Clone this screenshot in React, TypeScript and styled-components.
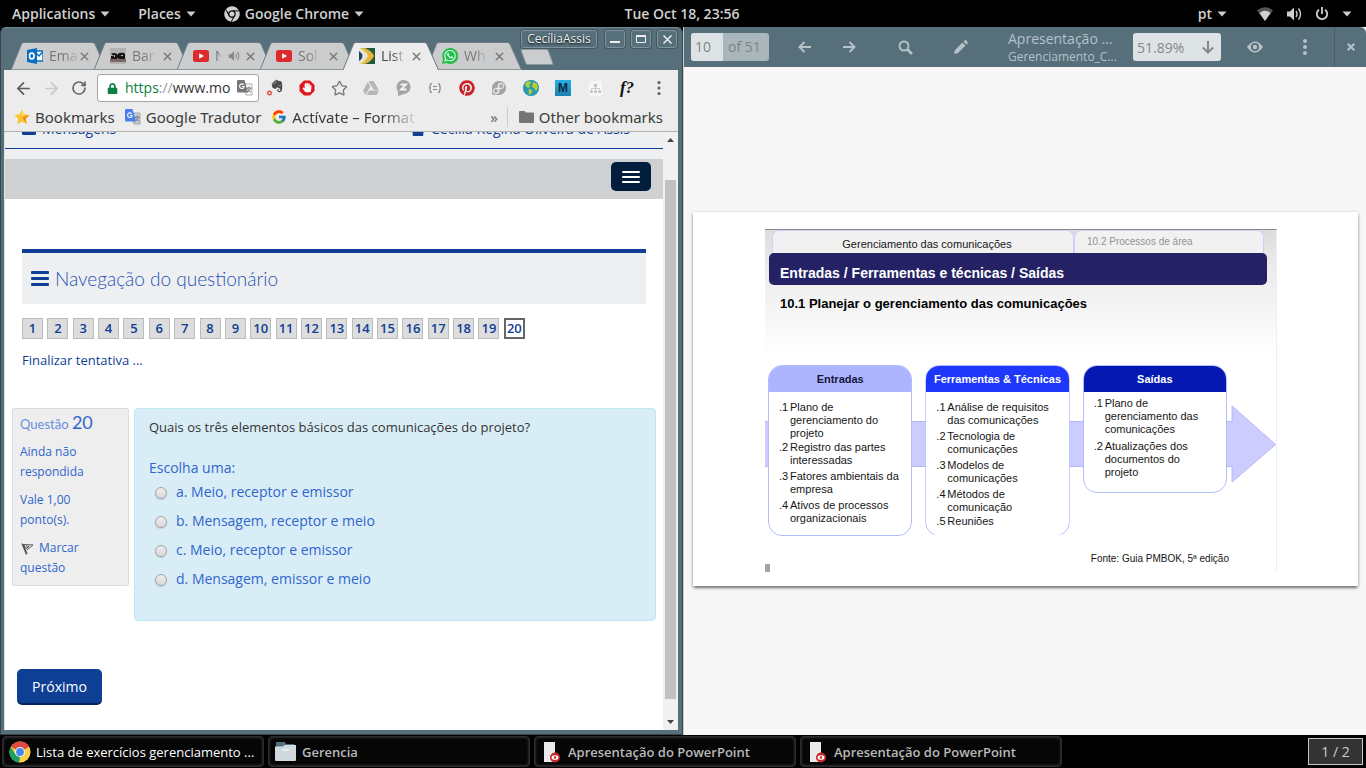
import React from 'react';
import styled, { createGlobalStyle, css } from 'styled-components';
import {
  FaChrome, FaWhatsapp, FaPinterest, FaGoogleDrive, FaFedora, FaEvernote, FaHandPaper, FaLock, FaGlobeAmericas, FaSitemap,
} from 'react-icons/fa';
import { FcGoogle } from 'react-icons/fc';
import { ArrowLeft, ArrowRight, RotateCw, Star, X } from 'lucide-react';

const ui = `'Open Sans', 'Noto Sans', sans-serif`;
const body = `'Open Sans', sans-serif`;
const navy = '#0f3e95';
const blue = '#2f66cc';
const frame = '#566f7b';

const Global = createGlobalStyle`
  *, *::before, *::after { box-sizing: border-box; }
  body { margin: 0; background: #000; font-family: ${ui}; }
  button, input { font: inherit; color: inherit; margin: 0; padding: 0; border: 0; background: none; }
  button { cursor: pointer; }
  a { color: inherit; text-decoration: none; }
  svg { display: block; flex: none; }
  p, h1, h2, h3, ul, ol, fieldset { margin: 0; padding: 0; border: 0; font-weight: inherit; list-style: none; }
`;

const Desktop = styled.div`
  display: flex;
  flex-direction: column;
  min-height: 100vh;
`;

/* ---------- Top panel ---------- */
const Panel = styled.header`
  display: grid;
  grid-template-columns: 1fr auto 1fr;
  align-items: center;
  height: 27px;
  padding: 0 14px 0 12px;
  color: #d0d0d0;
  font-size: 14px;
  font-weight: 600;
  line-height: 20px;
`;
const PanelGroup = styled.div<{ $end?: boolean }>`
  display: flex;
  align-items: center;
  gap: ${p => (p.$end ? 14 : 28)}px;
  justify-content: ${p => (p.$end ? 'flex-end' : 'flex-start')};
`;
const PanelButton = styled.button`
  display: flex;
  align-items: center;
  gap: 5px;
  white-space: nowrap;
`;
const StatusIcons = styled.div`
  display: flex;
  align-items: center;
  gap: 13px;
  margin-left: 16px;
`;
const Caret = () => (
  <svg width="10" height="6" viewBox="0 0 10 6"><path d="M0.5 0.5h9L5 5.5z" fill="#ccc" /></svg>
);

const Windows = styled.main`
  flex: 1;
  display: grid;
  grid-template-columns: minmax(0, 1fr) minmax(0, 1fr);
`;

/* ---------- Browser window ---------- */
const Browser = styled.section`
  position: relative;
  display: flex;
  flex-direction: column;
  background: ${frame};
  border: 1px solid #3a454b;
  border-top-color: #6d8791;
  border-radius: 6px 6px 0 0;
  padding: 0 4px 4px 3px;
`;
const WindowControls = styled.div`
  position: absolute;
  top: 2px;
  right: 5px;
  display: flex;
  gap: 6px;
`;
const controlBox = css`
  display: flex;
  align-items: center;
  justify-content: center;
  height: 18px;
  border: 1px solid #7e939c;
  border-radius: 3px;
  box-shadow: 0 0 0 1px #46585f;
  color: #f0f0f0;
`;
const UserBadge = styled.button`
  ${controlBox}
  width: 76px;
  margin-right: 2px;
  font-size: 12px;
  line-height: 16px;
  text-shadow: 0 1px 2px #000;
`;
const ControlButton = styled.button`
  ${controlBox}
  width: 20px;
`;
const TabStrip = styled.div`
  display: flex;
  align-items: flex-end;
  height: 42px;
  padding-left: 7px;
`;
const TabBox = styled.div<{ $active?: boolean }>`
  position: relative;
  z-index: ${p => (p.$active ? 2 : 1)};
  width: 96px;
  height: 28px;
  margin-right: -13px;
  padding: 0 16px 0 16px;
  display: flex;
  align-items: center;
  color: ${p => (p.$active ? '#454545' : '#777')};
  > svg:first-child { position: absolute; inset: 0; z-index: -1; }
`;
const TabTitle = styled.button`
  flex: 1;
  min-width: 0;
  display: flex;
  align-items: center;
  gap: 6px;
  white-space: nowrap;
  font-size: 14px;
  line-height: 20px;
`;
const TabText = styled.span<{ $narrow?: boolean }>`
  ${p => p.$narrow && 'width: 6px; overflow: hidden;'}
  mask-image: linear-gradient(90deg, #000 50%, rgba(0, 0, 0, 0.15));
`;
const TabClose = styled.button`
  color: #777;
  margin-left: 4px;
`;
const NewTab = styled.button`
  width: 28px;
  height: 16px;
  margin: 0 0 5px 14px;
  background: #cbcccd;
  border: 1px solid #8a979d;
  border-radius: 2px;
  transform: skewX(20deg);
`;

const Toolbar = styled.div`
  display: flex;
  align-items: center;
  height: 36px;
  padding: 0 3px 0 5px;
  background: #ececec;
  color: #5a5a5a;
`;
const ToolButton = styled.button<{ $w?: number }>`
  flex: none;
  width: ${p => p.$w ?? 32}px;
  height: 28px;
  display: flex;
  align-items: center;
  justify-content: center;
`;
const Address = styled.label`
  flex: 1;
  min-width: 0;
  height: 28px;
  margin-left: 4px;
  padding: 0 8px 0 9px;
  display: flex;
  align-items: center;
  gap: 7px;
  background: #fff;
  border: 1px solid #a5a5a5;
  border-radius: 3px;
  font-size: 14px;
  line-height: 20px;
  color: #333;
`;
const Url = styled.span`
  flex: 1;
  white-space: nowrap;
  i { font-style: normal; color: #0b8043; }
  em { font-style: normal; color: #999; }
`;
const Bookmarks = styled.nav`
  display: flex;
  align-items: center;
  height: 26px;
  padding: 0 15px 4px 10px;
  background: #ececec;
  border-bottom: 1px solid #b3b3b3;
  color: #3b3b3b;
  font-family: 'Noto Sans', sans-serif;
  font-size: 15px;
  line-height: 20px;
`;
const Bookmark = styled.a<{ $fade?: boolean }>`
  display: flex;
  align-items: center;
  gap: 5px;
  margin-right: 10px;
  white-space: nowrap;
  ${p => p.$fade && css`
    mask-image: linear-gradient(90deg, #000 78%, rgba(0, 0, 0, 0.1));
  `}
`;
const OtherBookmarks = styled(Bookmark)`
  margin: 0 0 0 9px;
  padding-left: 11px;
  border-left: 1px solid #ccc;
`;
const More = styled.button`
  margin-left: auto;
  color: #666;
`;

/* ---------- Quiz page ---------- */
const Viewport = styled.div`
  flex: 1;
  display: flex;
  background: #fff;
  border-left: 1px solid #dfe3e5;
`;
const Page = styled.div`
  flex: 1;
  min-width: 0;
  font-family: ${body};
  color: ${blue};
`;
const AccountBar = styled.div`
  display: grid;
  grid-template-columns: 389px 1fr;
  align-content: end;
  height: 17px;
  padding: 0 17px 9px;
  overflow: hidden;
  background: #eeeff1;
  border-bottom: 1px solid ${navy};
  color: ${navy};
  font-size: 14px;
  line-height: 20px;
`;
const AccountLink = styled.a`
  display: flex;
  align-items: center;
  gap: 6px;
  white-space: nowrap;
`;
const MenuBar = styled.div`
  display: flex;
  justify-content: flex-end;
  height: 50px;
  padding: 3px 12px 0;
  background: #cfd0d2;
  border-top: 10px solid #eeeff1;
`;
const MenuButton = styled.button`
  width: 40px;
  height: 29px;
  display: flex;
  align-items: center;
  justify-content: center;
  background: #031e3c;
  border-radius: 5px;
`;
const NavBlock = styled.section`
  margin: 50px 17px 0;
`;
const NavHeading = styled.h2`
  display: flex;
  align-items: center;
  gap: 6px;
  height: 55px;
  padding: 0 9px 0 9px;
  background: #eeeff1;
  border-top: 4px solid ${navy};
  color: #2553b4;
  font-family: Lato, sans-serif;
  font-size: 19px;
  font-weight: 300;
  line-height: 24px;
`;
const Numbers = styled.ol`
  display: flex;
  justify-content: space-between;
  max-width: 503px;
  margin-top: 14px;
`;
const NumberLink = styled.a<{ $current?: boolean }>`
  display: flex;
  justify-content: center;
  width: 21px;
  height: 21px;
  border: ${p => (p.$current ? '2px solid #666' : '1px solid #bbb')};
  background: ${p => (p.$current ? '#fff' : '#ddd')};
  color: ${navy};
  font-size: 13px;
  font-weight: 600;
  line-height: ${p => (p.$current ? 17 : 19)}px;
`;
const FinishLink = styled.a`
  display: inline-block;
  margin-top: 11px;
  color: ${navy};
  font-size: 13px;
  line-height: 20px;
`;
const Question = styled.div`
  display: flex;
  align-items: flex-start;
  gap: 5px;
  margin: 38px 7px 0;
`;
const Info = styled.aside`
  flex: none;
  width: 117px;
  padding: 3px 7px 7px;
  background: #eee;
  border: 1px solid #dcdcdc;
  border-radius: 2px;
  font-size: 12px;
  line-height: 20px;
  p { margin-top: 8px; }
`;
const InfoTitle = styled.h3`
  font-family: Lato, sans-serif;
  font-size: 13px;
  color: #6a8fdc;
  b { font-size: 18px; font-weight: 400; color: ${blue}; }
`;
const FlagButton = styled.button`
  margin-top: 8px;
  text-align: left;
  svg { display: inline-block; vertical-align: -4px; margin: 0 4px 0 1px; }
`;
const Content = styled.div`
  flex: 1;
  min-width: 0;
  min-height: 213px;
  padding: 8px 14px;
  background: #d9edf7;
  border: 1px solid #bce8f1;
  border-radius: 4px;
  font-size: 14px;
  line-height: 20px;
`;
const QuestionText = styled.p`
  margin-bottom: 21px;
  color: #333;
  font-size: 13px;
`;
const Options = styled.div`
  display: grid;
  gap: 9px;
  margin-top: 4px;
`;
const Option = styled.label`
  display: flex;
  align-items: center;
  gap: 9px;
  padding-left: 6px;
`;
const Radio = styled.input`
  appearance: none;
  width: 12px;
  height: 12px;
  border: 1px solid #a3a3a3;
  border-radius: 50%;
  background: linear-gradient(#ededed, #dadada);
  box-shadow: 0 1px 1px rgba(0, 0, 0, 0.15);
  margin-top: 2px;
`;
const NextButton = styled.button`
  display: block;
  margin: 48px 0 0 12px;
  width: 85px;
  height: 36px;
  background: ${navy};
  border-bottom: 2px solid #06245c;
  border-radius: 5px;
  color: #fff;
  font-size: 14px;
`;
const ScrollTrack = styled.div`
  width: 15px;
  display: flex;
  flex-direction: column;
  align-items: center;
  gap: 38px;
  padding: 6px 0;
  background: #f1f1f1;
`;
const ScrollThumb = styled.div`
  flex: 1;
  width: 11px;
  margin-bottom: -17px;
  background: #c1c1c1;
`;

/* ---------- Document viewer ---------- */
const Viewer = styled.section`
  display: flex;
  flex-direction: column;
  background: #f7f7f7;
  border-left: 1px solid #c9cccd;
`;
const ViewerBar = styled.div`
  display: flex;
  align-items: center;
  height: 40px;
  padding-left: 7px;
  background: ${frame};
  color: #b5c2c8;
  border-radius: 0 6px 0 0;
`;
const PageField = styled.label`
  display: flex;
  width: 78px;
  height: 28px;
  border-radius: 3px;
  overflow: hidden;
  background: #a9b6bb;
  color: #7d8386;
  font-size: 14px;
  line-height: 28px;
  input { width: 32px; margin-right: 5px; padding-left: 4px; background: #dde2e4; }
`;
const ViewerButton = styled.button<{ $w: number }>`
  width: ${p => p.$w}px;
  height: 40px;
  display: flex;
  align-items: center;
  justify-content: center;
`;
const DocTitle = styled.div`
  flex: 1;
  min-width: 0;
  margin: 0 16px 0 39px;
  font-size: 12px;
  line-height: 16px;
  white-space: nowrap;
  h1 { font-size: 14px; font-weight: 500; line-height: 20px; }
`;
const ZoomField = styled.label`
  display: flex;
  align-items: center;
  width: 88px;
  height: 28px;
  border-radius: 3px;
  background: #dde2e4;
  color: #84898c;
  font-size: 14px;
  input { width: 68px; padding-left: 4px; }
`;
const MoreButton = styled(ViewerButton)`
  margin-right: 13px;
`;
const CloseButton = styled(ViewerButton)`
  border-left: 1px solid #4a6069;
`;
const Paper = styled.article`
  flex: 1;
  display: flex;
  align-items: center;
  padding: 0 8px 5px 9px;
`;
const Sheet = styled.div`
  flex: 1;
  min-width: 0;
  padding: 17px 78px 14px 72px;
  background: #fff;
  box-shadow: 0 1px 3px rgba(0, 0, 0, 0.35), 0 3px 3px -1px rgba(0, 0, 0, 0.4);
`;
const Slide = styled.div`
  position: relative;
  height: 343px;
  margin-right: 3px;
  padding-right: 9px;
  border-right: 1px solid #ebebff;
  background: linear-gradient(#dcdcdc, #ececec 38px, #fff 126px);
  border-top: 1px solid #8b8b8b;
  font-family: 'Liberation Sans', sans-serif;
  color: #161616;
`;
const SlideTabs = styled.div`
  display: grid;
  grid-template-columns: 302px 1fr;
  height: 23px;
  margin: 0 3px 0 7px;
`;
const SlideTab = styled.div<{ $muted?: boolean }>`
  background: #f1f1f1;
  border: 1px solid #cfd0f7;
  border-bottom: 0;
  border-radius: 7px 7px 0 0;
  padding: ${p => (p.$muted ? '4px 12px' : '6px 0 0 8px')};
  text-align: ${p => (p.$muted ? 'left' : 'center')};
  color: ${p => (p.$muted ? '#929292' : '#161616')};
  font-size: ${p => (p.$muted ? 10 : 11)}px;
  line-height: 14px;
`;
const SlideTitle = styled.h2`
  height: 32px;
  margin-left: 4px;
  padding: 11px 11px 0;
  border-radius: 5px;
  background: #242265;
  color: #fff;
  font-size: 14px;
  font-weight: 700;
  line-height: 18px;
`;
const SlideSubtitle = styled.h3`
  padding: 11px 15px 0;
  font-size: 13px;
  font-weight: 700;
  line-height: 16px;
  color: #000;
`;
const FlowArrow = styled.svg`
  position: absolute;
  left: 0;
  right: 0;
  top: 175px;
  width: 100%;
  height: 78px;
`;
const Cards = styled.div`
  position: relative;
  display: grid;
  grid-template-columns: repeat(3, 1fr);
  align-items: start;
  gap: 13px;
  margin: 53px 40px 0 3px;
`;
const Card = styled.section<{ $h: number; $open?: boolean }>`
  height: ${p => p.$h}px;
  overflow: hidden;
  background: #fff;
  border: 1px solid #b4bcfb;
  border-radius: 14px;
  ${p => p.$open && 'clip-path: inset(0 0 1px 0);'}
`;
const CardTitle = styled.h4<{ $bg: string; $dark?: boolean }>`
  margin: 0;
  height: 26px;
  background: ${p => p.$bg};
  color: ${p => (p.$dark ? '#15153c' : '#fff')};
  font-size: 11px;
  font-weight: 700;
  line-height: 27px;
  text-align: center;
  white-space: nowrap;
`;
const CardList = styled.ul<{ $top: number }>`
  padding: ${p => p.$top}px 0 0 10px;
  font-size: 11px;
  line-height: 13px;
  white-space: nowrap;
`;
const CardItem = styled.li<{ $after?: number }>`
  display: grid;
  grid-template-columns: 11px 1fr;
  margin-bottom: ${p => p.$after ?? 0}px;
`;
const Source = styled.p`
  position: absolute;
  right: 47px;
  bottom: 6px;
  font-size: 10px;
  line-height: 14px;
`;
const SlideMark = styled.span`
  position: absolute;
  left: 0;
  bottom: 0;
  width: 5px;
  height: 8px;
  background: #a3a3a3;
`;

/* ---------- Task bar ---------- */
const TaskBar = styled.footer`
  display: flex;
  align-items: center;
  gap: 4px;
  height: 33px;
  padding: 0 3px 0 2px;
  font-size: 14px;
  line-height: 20px;
`;
const Task = styled.button<{ $active?: boolean }>`
  flex: 0 1 262px;
  min-width: 0;
  height: 31px;
  padding: 0 6px;
  display: flex;
  align-items: center;
  gap: ${p => (p.$active ? 5 : 6)}px;
  background: #060606;
  border: 1px solid #2c2c2c;
  border-radius: 4px;
  box-shadow: inset 0 0 3px #555;
  color: ${p => (p.$active ? '#fff' : '#b9b9b9')};
  font-size: 13px;
  font-weight: ${p => (p.$active ? 500 : 600)};
  white-space: nowrap;
`;
const Workspace = styled.button`
  width: 55px;
  height: 27px;
  margin-left: auto;
  border: 1px solid #c8c8c8;
  background: #333;
  color: #ccc;
`;

/* ---------- Drawings ---------- */
const ChromeLogo = () => (
  <svg width="22" height="22" viewBox="0 0 48 48">
    <circle cx="24" cy="24" r="23" fill="#fdd043" />
    <path d="M24 24 4.1 12.5A23 23 0 0 1 43.9 12.5z" fill="#dd4b3e" />
    <path d="M24 1a23 23 0 0 1 20 11.5H24z" fill="#dd4b3e" />
    <path d="M4.1 12.5 14 29.5 24 34.5 22 47A23 23 0 0 1 4.1 12.5z" fill="#1aa15f" />
    <circle cx="24" cy="24" r="11" fill="#f1f1f1" />
    <circle cx="24" cy="24" r="8.5" fill="#4587f3" />
  </svg>
);
const Outlook = () => (
  <svg width="16" height="16" viewBox="0 0 16 16">
    <path d="M8 3h8v10H8z" fill="#fff" stroke="#0a6fc2" strokeWidth="1.4" />
    <path d="m9 5 3 3 4-4.500" fill="none" stroke="#0a6fc2" strokeWidth="1.500" />
    <path d="M0 2 10 0v16L0 14z" fill="#0a6fc2" />
    <ellipse cx="4.800" cy="8" rx="2.300" ry="2.900" fill="none" stroke="#fff" strokeWidth="1.600" />
  </svg>
);
const Band = () => (
  <svg width="16" height="16" viewBox="0 0 16 16">
    <path d="M0 0h16v16H0z" fill="#b5b2b2" />
    <path d="M0 11h16v3H0z" fill="#7d6666" />
    <path d="M1 6q3-2 6 0v1l2-2q5-1 6 1v5H9l-1-1-1 1H1V8h3z" fill="#181414" />
    <path d="M4 7h1v2H4zM11 7h2v1h-2z" fill="#b9b9b9" />
  </svg>
);
const Arrowed = () => (
  <svg width="16" height="16" viewBox="0 0 16 16">
    <path d="M0 0h16v16H0z" fill="#1f5c3c" />
    <path d="M0 0h5l6 8-6 8H0z" fill="#e9e4cf" />
    <path d="M0 3q7 5 0 10z" fill="#18486e" />
    <path d="M1 0h5q7 3 9 8-2 5-9 8H1q6-3 8-8-2-5-8-8z" fill="#e5b53c" />
  </svg>
);
const Speaker = ({ size = 12, color = '#888' }: { size?: number; color?: string }) => (
  <svg width={size} height={size} viewBox="0 0 16 16" fill="none" stroke={color} strokeWidth="1.400">
    <path d="M1 5.500h3L8 1.500v13l-4-4H1z" fill={color} stroke="none" />
    <path d="M10 5q2 3 0 6M12.500 2.500q4 5.500 0 11" />
  </svg>
);
const Translate = ({ front = '#4a80ee', back = '#c8cdd6', ink = '#7a7f88' }: { front?: string; back?: string; ink?: string }) => (
  <svg width="16" height="16" viewBox="0 0 16 16">
    <path d="M6 4h9v11H9z" fill={back} stroke={ink} strokeWidth="0.600" />
    <path d="M9.500 8h5M12 6.500V8m1.700 0q-.7 3-3.700 4.500M10.500 8q1 3 3.500 4.500" fill="none" stroke={ink} />
    <path d="M1 0h6.500L11 12.500H1q-1 0-1-1V1q0-1 1-1z" fill={front} />
    <path d="M6.700 4.700A2.300 2.300 0 1 0 7.200 6.500H5" fill="none" stroke="#fff" strokeWidth="1.100" />
  </svg>
);
const MoreDots = ({ r = 1.5, h = 14 }: { r?: number; h?: number }) => (
  <svg width="6" height={h} viewBox={`0 0 6 ${h}`} fill="currentColor">
    <circle cx="3" cy={r} r={r} /><circle cx="3" cy={h / 2} r={r} /><circle cx="3" cy={h - r} r={r} />
  </svg>
);
const Bars = ({ w, h, t, gap, color }: { w: number; h: number; t: number; gap: number; color: string }) => (
  <svg width={w} height={h} viewBox={`0 0 ${w} ${h}`} fill={color}>
    {[0, 1, 2].map(i => <rect key={i} y={i * (t + gap)} width={w} height={t} rx="1" />)}
  </svg>
);
const Envelope = () => (
  <svg width="14" height="12" viewBox="0 0 14 12"><rect width="14" height="12" rx="1.500" fill={navy} /></svg>
);
const Person = () => (
  <svg width="14" height="14" viewBox="0 0 14 14" fill={navy}><circle cx="7" cy="4" r="3.500" /><path d="M2 14q-1.500-7 2-7h6q3.500 0 2 7z" /></svg>
);
const Evernote = () => (
  <svg width="18" height="18" viewBox="0 0 18 18">
    <g transform="translate(4 0)"><FaEvernote size={14} color="#4d4d4d" /></g>
    <circle cx="3.500" cy="14" r="3" fill="#d9503f" stroke="#ececec" /><circle cx="3.500" cy="14" r="1" fill="#fff" />
  </svg>
);
const AdBlock = () => (
  <svg width="16" height="16" viewBox="0 0 16 16">
    <path d="M5 0.500h6L15.500 5v6L11 15.500H5L0.500 11V5z" fill="#e2141c" />
    <g transform="translate(3 2.500)"><FaHandPaper size={10} color="#fff" /></g>
  </svg>
);
const ChatZ = () => (
  <svg width="16" height="16" viewBox="0 0 16 16">
    <circle cx="8.500" cy="7" r="7" fill="#a3a3a3" /><path d="M3 10v6l6-2z" fill="#a3a3a3" />
    <path d="M5.500 4.500h5.500l-5 5h5.500" fill="none" stroke="#f4f4f4" strokeWidth="1.800" />
  </svg>
);
const Braces = () => (
  <svg width="14" height="10" viewBox="0 0 14 10" fill="none" stroke="#888" strokeWidth="1.200">
    <path d="M4 .6q-2 0-1.700 2T1 5q1.500.2 1.300 2.400t1.700 2M10 .6q2 0 1.700 2T13 5q-1.500.2-1.300 2.400t-1.700 2M5 3.500h4M5 6.500h4" />
  </svg>
);
const Globe = () => (
  <svg width="16" height="16" viewBox="0 0 16 16">
    <circle cx="8" cy="8" r="8" fill="#2a9ab5" /><FaGlobeAmericas size={16} color="#2a9ab5" />
    <path d="M2 4q2-3 5-3l1 2-2 2 1 2-2 1-2-2zM6 9l3 1v2l-2 3q-2-2-1-6zM10 2l4 2 1 4-2 3-2-3-2-1z" fill="#b9d12c" />
  </svg>
);
const SitemapTile = styled.span`
  padding: 2px 1px;
  border-radius: 2px;
  background: #f6f6f6;
`;
const MTile = styled.span`
  width: 16px;
  height: 16px;
  background: linear-gradient(#27b0e6, #1f7fae);
  color: #0c2a3c;
  font: 700 12px/16px 'Liberation Sans', sans-serif;
`;
const FontQuery = styled.span`
  font: italic 700 17px/20px 'Liberation Serif', serif;
  color: #111;
`;
const YellowStar = () => (
  <svg width="16" height="16" viewBox="0 0 16 16">
    <path d="m8 .5 2.300 4.800 5.300.700-3.900 3.700 1 5.300L8 12.500l-4.700 2.500 1-5.300L.4 6l5.300-.7z" fill="#fbc42d" />
    <path d="m8 8 7.600-2-3.900 3.700 1 5.300z" fill="#ef8d1e" />
    <path d="M8 8V.500l2.300 4.800z" fill="#fde36a" />
  </svg>
);
const Folder = () => (
  <svg width="15" height="12" viewBox="0 0 15 12"><path d="M1 0h4.500L7 1.500h7q1 0 1 1V11q0 1-1 1H1q-1 0-1-1V1q0-1 1-1z" fill="#757575" /></svg>
);
const Flag = () => (
  <svg width="14" height="14" viewBox="0 0 14 14" fill="none" stroke="#555">
    <path d="m1 1.500 4.500 11M2.500 2.500 6 12" strokeWidth="1.200" /><path d="m2 2.500 10 .5-5.500 4.500zM5 4l3 .5-2 1.500" />
  </svg>
);
const DocIcon = () => (
  <svg width="21" height="22" viewBox="0 0 21 22">
    <path d="M3 1h11v20H3z" fill="#eaeaea" /><circle cx="14" cy="16.500" r="5" fill="#c9292b" />
    <ellipse cx="14" cy="16.500" rx="3.400" ry="2.300" fill="#fff" /><circle cx="14" cy="16.500" r="1.300" fill="#c9292b" />
  </svg>
);
const FilesIcon = () => (
  <svg width="21" height="21" viewBox="0 0 21 21">
    <path d="M1 1h9l1 2h8v4H1z" fill="#546f7b" /><path d="M0 5.500h8L9.500 4H21v15q0 1-1 1H1q-1 0-1-1z" fill="#d0d9de" />
    <path d="M7 8.500h7v1H7z" fill="#fff" />
  </svg>
);
const GArrow = ({ dir }: { dir: 'left' | 'right' | 'down' }) => (
  <svg width="14" height="14" viewBox="0 0 14 14" fill="none" stroke="currentColor" strokeWidth="2"
    transform={`rotate(${{ left: 180, right: 0, down: 90 }[dir]})`}>
    <path d="M1 7h11M7.500 2l5 5-5 5" />
  </svg>
);
const TabShape = ({ active }: { active?: boolean }) => (
  <svg width="96" height="28" viewBox="0 0 96 28">
    <path d="M0 28 10.500 2Q11 .5 13 .5H81Q83 .5 84 2L95.500 28" fill={active ? '#ececec' : '#cbcccd'} stroke="#6e7b80" />
    {!active && <path d="M0 27.500h96" stroke="#909698" />}
  </svg>
);

type TabInfo = { label: string; icon: React.ReactNode; active?: boolean; audio?: boolean };
const yt = (
  <svg width="16" height="16" viewBox="0 0 16 16"><rect y="2" width="16" height="12" rx="2.500" fill="#dd2a2a" /><path d="m6.200 5.200 4.800 2.800-4.800 2.800z" fill="#fff" /></svg>
);
const tabs: TabInfo[] = [
  { label: 'Ema', icon: <Outlook /> },
  { label: 'Bar', icon: <Band /> },
  { label: 'N', icon: yt, audio: true },
  { label: 'Sol', icon: yt },
  { label: 'List', icon: <Arrowed />, active: true },
  {
    label: 'Wh',
    icon: <svg width="16" height="16" viewBox="0 0 16 16"><path d="M8 0a8 8 0 1 1-3.500 15L0 16l1-4.500A8 8 0 0 1 8 0z" fill="#23c04a" /><g transform="translate(1.500 1.200)"><FaWhatsapp size={13} color="#fff" /></g></svg>,
  },
];
const extensions: [string, React.ReactNode][] = [
  ['Evernote', <Evernote />],
  ['AdBlock', <AdBlock />],
  ['Favoritar', <Star size={17} strokeWidth={1.8} color="#777" />],
  ['Drive', <FaGoogleDrive size={16} color="#b5b5b5" />],
  ['Chat', <ChatZ />],
  ['JSON', <Braces />],
  ['Pinterest', <FaPinterest size={16} color="#cb2027" />],
  ['Fedora', <FaFedora size={16} color="#a3a3a3" />],
  ['Mapa', <Globe />],
  ['M', <MTile>M</MTile>],
  ['Sitemap', <SitemapTile><FaSitemap size={11} color="#c0c0c0" /></SitemapTile>],
  ['Fonte', <FontQuery>f?</FontQuery>],
  ['Menu', <MoreDots />],
];
const options = ['a. Meio, receptor e emissor', 'b. Mensagem, receptor e meio', 'c. Meio, receptor e emissor', 'd. Mensagem, emissor e meio'];

type Item = { n: string; lines: string[]; after?: number };
const cards: { title: string; bg: string; dark?: boolean; h: number; open?: boolean; top: number; items: Item[] }[] = [
  {
    title: 'Entradas', bg: '#adb5ff', dark: true, h: 171, top: 9,
    items: [
      { n: '.1', lines: ['Plano de', 'gerenciamento do', 'projeto'], after: 1 },
      { n: '.2', lines: ['Registro das partes', 'interessadas'], after: 3 },
      { n: '.3', lines: ['Fatores ambientais da', 'empresa'], after: 3 },
      { n: '.4', lines: ['Ativos de processos', 'organizacionais'] },
    ],
  },
  {
    title: 'Ferramentas & Técnicas', bg: '#1f37fb', h: 171, open: true, top: 9,
    items: [
      { n: '.1', lines: ['Análise de requisitos', 'das comunicações'], after: 3 },
      { n: '.2', lines: ['Tecnologia de', 'comunicações'], after: 3 },
      { n: '.3', lines: ['Modelos de', 'comunicações'], after: 3 },
      { n: '.4', lines: ['Métodos de', 'comunicação'], after: 1 },
      { n: '.5', lines: ['Reuniões'] },
    ],
  },
  {
    title: 'Saídas', bg: '#0519b2', h: 128, top: 5,
    items: [
      { n: '.1', lines: ['Plano de', 'gerenciamento das', 'comunicações'], after: 4 },
      { n: '.2', lines: ['Atualizações dos', 'documentos do', 'projeto'] },
    ],
  },
];

export default function App() {
  return (
    <Desktop>
      <Global />
      <Panel>
        <PanelGroup>
          <PanelButton>Applications <Caret /></PanelButton>
          <PanelButton>Places <Caret /></PanelButton>
          <PanelButton><FaChrome size={16} /> Google Chrome <Caret /></PanelButton>
        </PanelGroup>
        <time>Tue Oct 18, 23:56</time>
        <PanelGroup $end>
          <PanelButton>pt <Caret /></PanelButton>
          <StatusIcons>
            <svg width="16" height="14" viewBox="0 0 16 14">
              <path d="M0 3.500Q8-3 16 3.500L8 14z" fill="#555" /><path d="M2.500 6Q8 1.500 13.500 6L8 14z" fill="#d0d0d0" />
            </svg>
            <Speaker size={16} color="#d0d0d0" />
            <svg width="14" height="14" viewBox="0 0 14 14" fill="none" stroke="#d0d0d0" strokeWidth="1.800"><path d="M4 2.700a5.200 5.200 0 1 0 6 0M7 0v7" /></svg>
            <Caret />
          </StatusIcons>
        </PanelGroup>
      </Panel>

      <Windows>
        <Browser>
          <WindowControls>
            <UserBadge>CecíliaAssis</UserBadge>
            <ControlButton aria-label="Minimizar"><svg width="10" height="8" viewBox="0 0 10 8"><path d="M0 6h10v2H0z" fill="#eee" /></svg></ControlButton>
            <ControlButton aria-label="Maximizar"><svg width="10" height="8" viewBox="0 0 10 8"><path d="M.5 1h9v6.500h-9z" fill="none" stroke="#eee" /><path d="M0 0h10v2H0z" fill="#eee" /></svg></ControlButton>
            <ControlButton aria-label="Fechar"><svg width="9" height="9" viewBox="0 0 9 9"><path d="m.5.5 8 8m0-8-8 8" stroke="#eee" strokeWidth="1.500" /></svg></ControlButton>
          </WindowControls>
          <TabStrip role="tablist">
            {tabs.map(t => (
              <TabBox key={t.label} $active={t.active}>
                <TabShape active={t.active} />
                <TabTitle role="tab" aria-selected={!!t.active}>{t.icon}<TabText $narrow={t.audio}>{t.label}</TabText></TabTitle>
                {t.audio && <Speaker />}
                <TabClose aria-label="Fechar guia"><X size={13} strokeWidth={2.5} /></TabClose>
              </TabBox>
            ))}
            <NewTab aria-label="Nova guia" />
          </TabStrip>
          <Toolbar>
            <ToolButton $w={28} aria-label="Voltar"><ArrowLeft size={19} strokeWidth={2.2} /></ToolButton>
            <ToolButton $w={28} aria-label="Avançar"><ArrowRight size={19} strokeWidth={2.2} color="#c9c9c9" /></ToolButton>
            <ToolButton $w={28} aria-label="Recarregar"><RotateCw size={16} strokeWidth={2.5} color="#666" /></ToolButton>
            <Address>
              <FaLock size={11} color="#0b8043" />
              <Url><i>https</i><em>://</em>www.mo</Url>
              <Translate front="#777" back="#fff" ink="#777" />
            </Address>
            {extensions.map(([name, icon]) => <ToolButton key={name} aria-label={name}>{icon}</ToolButton>)}
          </Toolbar>
          <Bookmarks>
            <Bookmark href="#"><YellowStar />Bookmarks</Bookmark>
            <Bookmark href="#"><Translate />Google Tradutor</Bookmark>
            <Bookmark href="#" $fade><FcGoogle size={16} />Actívate – Format</Bookmark>
            <More>»</More>
            <OtherBookmarks href="#"><Folder />Other bookmarks</OtherBookmarks>
          </Bookmarks>

          <Viewport>
            <Page>
              <AccountBar>
                <AccountLink href="#"><Envelope />Mensagens</AccountLink>
                <AccountLink href="#"><Person />Cecília Regina Oliveira de Assis</AccountLink>
              </AccountBar>
              <MenuBar>
                <MenuButton aria-label="Menu"><Bars w={18} h={12} t={2} gap={3} color="#fff" /></MenuButton>
              </MenuBar>
              <NavBlock>
                <NavHeading><Bars w={18} h={15} t={3} gap={3} color={navy} />Navegação do questionário</NavHeading>
                <Numbers>
                  {Array.from({ length: 20 }, (_, i) => (
                    <li key={i}><NumberLink href="#" $current={i === 19}>{i + 1}</NumberLink></li>
                  ))}
                </Numbers>
                <FinishLink href="#">Finalizar tentativa ...</FinishLink>
              </NavBlock>
              <Question>
                <Info>
                  <InfoTitle>Questão <b>20</b></InfoTitle>
                  <p>Ainda não respondida</p>
                  <p>Vale 1,00 ponto(s).</p>
                  <FlagButton><Flag />Marcar questão</FlagButton>
                </Info>
                <Content>
                  <QuestionText>Quais os três elementos básicos das comunicações do projeto?</QuestionText>
                  <fieldset>
                    Escolha uma:
                    <Options>
                      {options.map(o => (
                        <Option key={o}><Radio type="radio" name="resposta" />{o}</Option>
                      ))}
                    </Options>
                  </fieldset>
                </Content>
              </Question>
              <NextButton>Próximo</NextButton>
            </Page>
            <ScrollTrack>
              <svg width="7" height="4" viewBox="0 0 7 4"><path d="M0 4h7L3.500 0z" fill="#444" /></svg>
              <ScrollThumb />
              <svg width="7" height="4" viewBox="0 0 7 4"><path d="M0 0h7L3.500 4z" fill="#444" /></svg>
            </ScrollTrack>
          </Viewport>
        </Browser>

        <Viewer>
          <ViewerBar>
            <PageField><input defaultValue="10" aria-label="Página" />of 51</PageField>
            <ViewerButton $w={72} aria-label="Anterior"><GArrow dir="left" /></ViewerButton>
            <ViewerButton $w={16} aria-label="Próxima"><GArrow dir="right" /></ViewerButton>
            <ViewerButton $w={96} aria-label="Buscar">
              <svg width="15" height="15" viewBox="0 0 15 15" fill="none" stroke="currentColor" strokeWidth="2"><circle cx="6" cy="6" r="4.500" /><path d="m9.500 9.500 4.500 4.500" strokeWidth="2.600" /></svg>
            </ViewerButton>
            <ViewerButton $w={16} aria-label="Anotar">
              <svg width="14" height="14" viewBox="0 0 14 14" fill="currentColor"><path d="M0 14l1-4 7.500-7.500 3 3L4 13zM9.500 1.500 11 0q1.500-.2 3 3l-1.500 1.500z" /></svg>
            </ViewerButton>
            <DocTitle><h1>Apresentação ...</h1><p>Gerenciamento_C...</p></DocTitle>
            <ZoomField><input defaultValue="51.89%" aria-label="Zoom" /><GArrow dir="down" /></ZoomField>
            <ViewerButton $w={68} aria-label="Exibir">
              <svg width="16" height="12" viewBox="0 0 16 12"><path fillRule="evenodd" d="M0 6q8-11 16 0-8 11-16 0zM8 2a4 4 0 1 0 0 8 4 4 0 0 0 0-8z" fill="currentColor" /><circle cx="8" cy="6" r="2.200" fill="currentColor" /></svg>
            </ViewerButton>
            <MoreButton $w={32} aria-label="Mais"><MoreDots r={2} h={16} /></MoreButton>
            <CloseButton $w={32} aria-label="Fechar">
              <svg width="8" height="8" viewBox="0 0 8 8"><path d="m.7.7 6.600 6.600m0-6.600L.7 7.300" stroke="currentColor" strokeWidth="2" /></svg>
            </CloseButton>
          </ViewerBar>
          <Paper>
            <Sheet>
              <Slide>
                <FlowArrow viewBox="0 0 512 78" preserveAspectRatio="none">
                  <path d="M0 16.500h468V1l43.500 38.500L468 77V61.500H0" fill="#ccccff" stroke="#b3b5f6" />
                </FlowArrow>
                <SlideTabs>
                  <SlideTab>Gerenciamento das comunicações</SlideTab>
                  <SlideTab $muted>10.2 Processos de área</SlideTab>
                </SlideTabs>
                <SlideTitle>Entradas / Ferramentas e técnicas / Saídas</SlideTitle>
                <SlideSubtitle>10.1 Planejar o gerenciamento das comunicações</SlideSubtitle>
                <Cards>
                  {cards.map(c => (
                    <Card key={c.title} $h={c.h} $open={c.open}>
                      <CardTitle $bg={c.bg} $dark={c.dark}>{c.title}</CardTitle>
                      <CardList $top={c.top}>
                        {c.items.map(i => (
                          <CardItem key={i.n} $after={i.after}>
                            <span>{i.n}</span>
                            <span>{i.lines.map(l => <div key={l}>{l}</div>)}</span>
                          </CardItem>
                        ))}
                      </CardList>
                    </Card>
                  ))}
                </Cards>
                <Source>Fonte: Guia PMBOK, 5ª edição</Source>
                <SlideMark />
              </Slide>
            </Sheet>
          </Paper>
        </Viewer>
      </Windows>

      <TaskBar>
        <Task $active><ChromeLogo /><span>Lista de exercícios gerenciamento ...</span></Task>
        <Task><FilesIcon /><span>Gerencia</span></Task>
        <Task><DocIcon /><span>Apresentação do PowerPoint</span></Task>
        <Task><DocIcon /><span>Apresentação do PowerPoint</span></Task>
        <Workspace>1 / 2</Workspace>
      </TaskBar>
    </Desktop>
  );
}
